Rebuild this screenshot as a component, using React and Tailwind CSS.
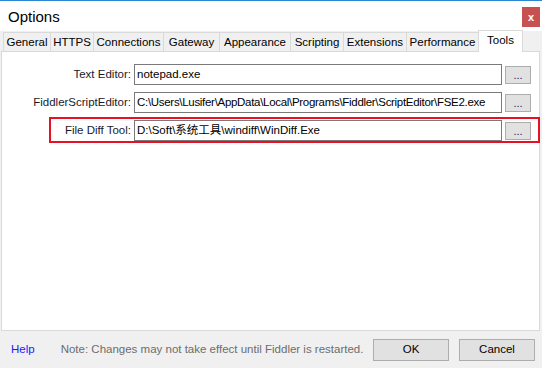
import React from "react";

const tabs = [
  { name: "General", w: "w-[47px]" },
  { name: "HTTPS", w: "w-[43px]" },
  { name: "Connections", w: "w-[70px]" },
  { name: "Gateway", w: "w-[56px]" },
  { name: "Appearance", w: "w-[71px]" },
  { name: "Scripting", w: "w-[53px]" },
  { name: "Extensions", w: "w-[63px]" },
  { name: "Performance", w: "w-[72px]" },
];

function Row({ label, value, tight }) {
  return (
    <div className="flex items-center h-[21px]">
      <div className="w-[132px] pr-[3px] text-right text-[11.5px] text-[#1a1a2e] whitespace-nowrap">{label}</div>
      <div
        className={`w-[368px] h-[21px] border border-[#7a7a7a] bg-white px-[2px] text-[11.5px] leading-[19px] text-black whitespace-nowrap overflow-hidden ${
          tight ? "tracking-[-0.3px]" : ""
        }`}
      >
        {value}
      </div>
      <button className="ml-[3px] w-[26px] h-[18px] border border-[#adadad] bg-[#e1e1e1] text-[11px] leading-[12px] text-[#1a1a6e]">
        ...
      </button>
    </div>
  );
}

export default function App() {
  return (
    <div
      className="w-[542px] h-[368px] bg-[#f0f0f0] flex flex-col overflow-hidden"
      style={{ fontFamily: '"Liberation Sans", "Noto Sans CJK SC", sans-serif' }}
    >
      {/* title bar */}
      <div className="h-[31px] bg-white border-t border-[#2b86d4] flex items-start justify-between">
        <div className="pl-[8px] pt-[5px] text-[15px] text-black">Options</div>
        <div className="mt-[6px] mr-[2px] w-[18px] h-[20px] bg-[#c75050] text-white text-[11px] font-bold flex items-center justify-center">
          x
        </div>
      </div>

      {/* tab strip */}
      <div className="h-[20px] flex items-end pl-[3px] relative z-10">
        {tabs.map((t) => (
          <div
            key={t.name}
            className={`${t.w} h-[19px] border border-r-0 border-b-0 border-[#d9d9d9] bg-[#f0f0f0] text-[11.5px] leading-[18px] text-center text-black whitespace-nowrap`}
          >
            {t.name}
          </div>
        ))}
        <div className="w-[45px] h-[22px] -mb-[1px] border border-b-0 border-[#d9d9d9] bg-white text-[11.5px] leading-[18px] text-center text-black">
          Tools
        </div>
      </div>

      {/* panel */}
      <div className="ml-[1px] w-[539px] h-[280px] bg-white border border-[#d9d9d9] relative">
        <div className="pt-[12px] flex flex-col gap-[7px]">
          <Row label="Text Editor:" value="notepad.exe" />
          <Row
            label="FiddlerScriptEditor:"
            value="C:\Users\Lusifer\AppData\Local\Programs\Fiddler\ScriptEditor\FSE2.exe"
            tight
          />
          <Row label="File Diff Tool:" value="D:\Soft\系统工具\windiff\WinDiff.Exe" />
        </div>
        <div className="absolute left-[47px] top-[65px] w-[491px] h-[26px] border-2 border-[#e81123]" />
      </div>

      {/* bottom bar */}
      <div className="flex-1 flex items-center">
        <a className="ml-[11px] text-[11.5px] text-[#1a1aff]">Help</a>
        <span className="ml-[26px] text-[11.5px] text-[#6d6d6d] whitespace-nowrap">
          Note: Changes may not take effect until Fiddler is restarted.
        </span>
        <button className="ml-auto w-[76px] h-[22px] border border-[#adadad] bg-[#e1e1e1] text-[11.5px] text-black">
          OK
        </button>
        <button className="ml-[10px] mr-[7px] w-[76px] h-[22px] border border-[#adadad] bg-[#e1e1e1] text-[11.5px] text-black">
          Cancel
        </button>
      </div>
    </div>
  );
}
